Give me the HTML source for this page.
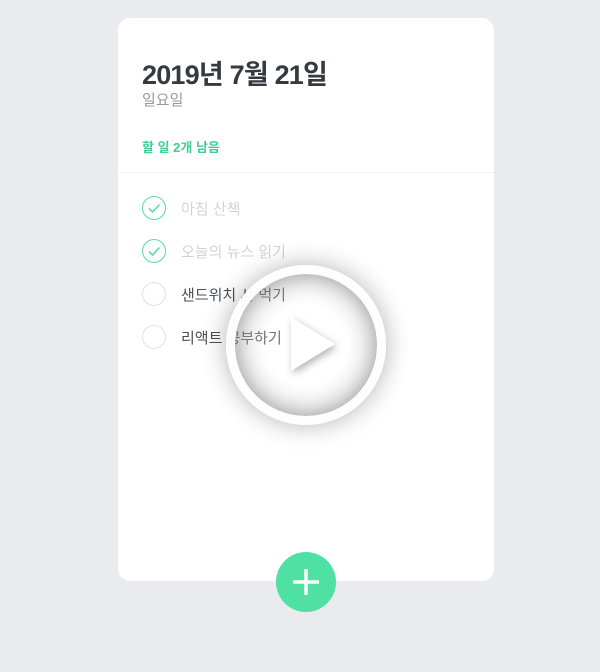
<!DOCTYPE html>
<html><head><meta charset="utf-8"><style>
body{margin:0;width:600px;height:672px;background:#e9ebef;font-family:"Liberation Sans","Noto Sans CJK KR",sans-serif;position:relative;overflow:hidden}
.card{position:absolute;left:118px;top:18px;width:376px;height:563px;background:#fff;border-radius:12px}
h1{position:absolute;left:24px;top:35px;margin:0;font-size:27px;font-weight:700;color:#343a40;letter-spacing:-0.8px}
.day{position:absolute;left:24px;top:71px;font-size:15px;color:#999}
.left{position:absolute;left:24px;top:119px;font-size:13px;font-weight:700;color:#3fcf93}
.div{position:absolute;left:0;right:0;top:154px;border-top:1px solid #f1f3f5}
.item{position:absolute;left:24px;height:26px;display:flex;align-items:center}
.c{width:24px;height:24px;border-radius:50%;border:1px solid #dee2e6;display:flex;align-items:center;justify-content:center;box-sizing:border-box}
.c.d{border-color:#5dd9a6}
.t{margin-left:15px;font-size:15px;color:#495057}
.t.d{color:#ced4da}
.plus{position:absolute;left:276px;top:552px;width:60px;height:60px;border-radius:50%;background:#4fe0a3;display:flex;align-items:center;justify-content:center}
.play{position:absolute;left:226px;top:265px;width:160px;height:160px;border-radius:50%;border:9px solid rgba(255,255,255,.95);box-sizing:border-box;box-shadow:0 0 25px rgba(0,0,0,.3), inset 0 0 22px rgba(0,0,0,.35);background:radial-gradient(circle,rgba(255,255,255,.2) 40%,rgba(200,200,200,.5) 80%,rgba(170,170,170,.7) 100%)}
</style></head><body>
<div class="card">
<h1>2019년 7월 21일</h1>
<div class="day">일요일</div>
<div class="left">할 일 2개 남음</div>
<div class="div"></div>
<div class="item" style="top:177px"><div class="c d"><svg width="14" height="14" viewBox="0 0 14 14"><path d="M2 7.5l3.5 3.5 7-7.5" fill="none" stroke="#5dd9a6" stroke-width="1.6"/></svg></div><span class="t d">아침 산책</span></div>
<div class="item" style="top:220px"><div class="c d"><svg width="14" height="14" viewBox="0 0 14 14"><path d="M2 7.5l3.5 3.5 7-7.5" fill="none" stroke="#5dd9a6" stroke-width="1.6"/></svg></div><span class="t d">오늘의 뉴스 읽기</span></div>
<div class="item" style="top:263px"><div class="c"></div><span class="t">샌드위치 사 먹기</span></div>
<div class="item" style="top:306px"><div class="c"></div><span class="t">리액트 공부하기</span></div>
</div>
<div class="plus"><svg width="30" height="30" viewBox="0 0 30 30"><path d="M15 2v26M2 15h26" stroke="#fff" stroke-width="3.5"/></svg></div>
<div class="play"></div>
<svg style="position:absolute;left:226px;top:265px;filter:drop-shadow(2px 3px 4px rgba(0,0,0,.3))" width="160" height="160"><path d="M65 52v54l44-27z" fill="#fff"/></svg>
</body></html>
